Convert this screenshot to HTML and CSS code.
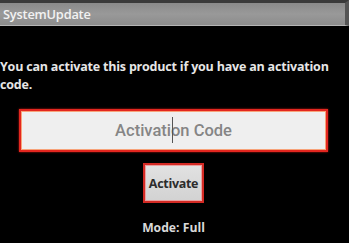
FILE: index.html
```html
<!DOCTYPE html>
<html>
<head>
<meta charset="utf-8">
<link rel="stylesheet" href="styles.css">
</head>
<body>
<div class="screen">
  <div class="titlebar"><span class="title">SystemUpdate</span></div>
  <p class="message">You can activate this product if you have an activation code.</p>
  <div class="form">
    <div class="field">
      <span class="placeholder">Activati<span class="caret"></span>on Code</span>
    </div>
    <button class="btn">Activate</button>
    <div class="mode">Mode: Full</div>
  </div>
</div>
</body>
</html>
```

FILE: styles.css
```css
html, body {
  margin: 0;
  padding: 0;
  background: #000;
}
.screen {
  width: 349px;
  height: 243px;
  background: #000;
  overflow: hidden;
  font-family: "Open Sans", "Noto Sans", sans-serif;
}
.titlebar {
  height: 22px;
  border-top: 3px solid #3a3a3a;
  border-bottom: 1px solid #b5b5b5;
  border-right: 4px solid #555;
  background: linear-gradient(#8a8a8a, #999 50%, #8c8c8c);
  display: flex;
  align-items: center;
  padding-left: 3px;
}
.title {
  color: #f2f2f2;
  font-size: 12.8px;
  font-weight: 600;
  letter-spacing: -0.2px;
}
.message {
  margin: 32px 0 0 0;
  color: #e6e6e6;
  font-size: 12.5px;
  font-weight: 700;
  line-height: 18px;
  letter-spacing: -0.2px;
}
.form {
  display: flex;
  flex-direction: column;
  align-items: center;
  margin: 15px 21px 0 19px;
}
.field {
  box-sizing: border-box;
  width: 100%;
  height: 43px;
  background: #efefef;
  border: 2px solid #e3261f;
  box-shadow: inset 0 0 0 1px #f7a37a, 0 0 2px #b31a10;
  display: flex;
  align-items: center;
  justify-content: center;
}
.placeholder {
  position: relative;
  font-family: Roboto, "Noto Sans", sans-serif;
  font-size: 16.5px;
  font-weight: 500;
  color: #858585;
}
.caret {
  position: absolute;
  display: inline-block;
  width: 1px;
  height: 26px;
  top: -4px;
  margin-left: 1px;
  background: #555;
}
.btn {
  box-sizing: border-box;
  margin-top: 11px;
  width: 61px;
  height: 40px;
  padding: 0;
  border: 2px solid #d42a24;
  box-shadow: inset 0 0 0 1px #e9a0a0;
  background: linear-gradient(#e2e2e2, #d2d2d2);
  color: #2c2c2c;
  font-family: "Open Sans", "Noto Sans", sans-serif;
  font-size: 12.5px;
  font-weight: 700;
  letter-spacing: -0.3px;
}
.mode {
  margin-top: 16px;
  color: #d8d8d8;
  font-size: 12.2px;
  font-weight: 700;
}
```
